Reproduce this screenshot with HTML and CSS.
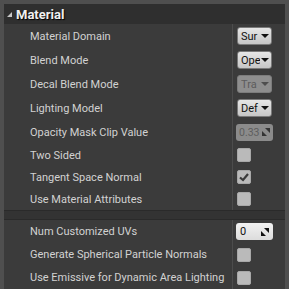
FILE: index.html
```html
<!DOCTYPE html>
<html>
<head>
<meta charset="utf-8">
<link rel="stylesheet" href="styles.css">
</head>
<body>
<div class="frame">
  <div class="panel">
    <div class="header"><span class="tri"></span><span class="title">Material</span></div>
    <div class="rows">
      <div class="row r24"><div class="label">Material Domain</div><div class="val"><div class="combo"><span class="ct">Sur</span><span class="arr"></span></div></div></div>
      <div class="row r24"><div class="label">Blend Mode</div><div class="val"><div class="combo"><span class="ct">Ope</span><span class="arr"></span></div></div></div>
      <div class="row r24"><div class="label">Decal Blend Mode</div><div class="val"><div class="combo dis"><span class="ct">Tra</span><span class="arr"></span></div></div></div>
      <div class="row r24"><div class="label">Lighting Model</div><div class="val"><div class="combo"><span class="ct">Def</span><span class="arr"></span></div></div></div>
      <div class="row r24"><div class="label">Opacity Mask Clip Value</div><div class="val"><div class="num dis"><span class="nt">0.33</span><svg class="spin" width="8" height="8" viewBox="0 0 8 8"><path d="M3 0H8V5Z"/><path d="M0 3V8H5Z"/></svg></div></div></div>
      <div class="row r22"><div class="label">Two Sided</div><div class="val"><div class="chk"></div></div></div>
      <div class="row r22"><div class="label">Tangent Space Normal</div><div class="val"><div class="chk"><svg width="14" height="14" viewBox="0 0 14 14"><path d="M3 7.5L6 10L11 4" fill="none" stroke="#3a3a3a" stroke-width="2.2"/></svg></div></div></div>
      <div class="row r22"><div class="label">Use Material Attributes</div><div class="val"><div class="chk"></div></div></div>
      <div class="sep"></div>
      <div class="row r23"><div class="label">Num Customized UVs</div><div class="val"><div class="num"><span class="nt">0</span><svg class="spin" width="8" height="8" viewBox="0 0 8 8"><path d="M3 0H8V5Z"/><path d="M0 3V8H5Z"/></svg></div></div></div>
      <div class="row r23"><div class="label">Generate Spherical Particle Normals</div><div class="val"><div class="chk"></div></div></div>
      <div class="row r23"><div class="label">Use Emissive for Dynamic Area Lighting</div><div class="val"><div class="chk"></div></div></div>
    </div>
  </div>
</div>
</body>
</html>
```

FILE: styles.css
```css
html, body {
  margin: 0;
  padding: 0;
  background: #4f4f4f;
  overflow: hidden;
}
.frame {
  width: 289px;
  height: 289px;
  padding: 4px 4px 0 4px;
  box-sizing: border-box;
}
.panel {
  width: 281px;
  height: 285px;
  background: #3b3b3b;
  display: flex;
  flex-direction: column;
  font-family: Roboto, "Noto Sans", sans-serif;
}
.header {
  height: 20px;
  background: #2f2f2f;
  display: flex;
  align-items: center;
  padding-left: 3px;
  flex: none;
}
.tri {
  width: 0;
  height: 0;
  border-left: 5px solid transparent;
  border-bottom: 5px solid #c8c8c8;
  margin-right: 4px;
  margin-top: 1px;
}
.title {
  color: #f0f0f0;
  font-weight: bold;
  font-size: 13px;
  text-shadow: 1px 1px 1px #000;
}
.rows {
  display: flex;
  flex-direction: column;
}
.row {
  display: flex;
  align-items: stretch;
}
.r24 { height: 24px; }
.r22 { height: 22px; }
.r23 { height: 23px; }
.label {
  width: 202px;
  padding-left: 26px;
  color: #d2d2d2;
  font-size: 11px;
  display: flex;
  align-items: center;
  white-space: nowrap;
  overflow: hidden;
}
.val {
  border-left: 1px solid #4c4c4c;
  padding-left: 4px;
  display: flex;
  align-items: center;
  flex: 1;
}
.sep {
  height: 10px;
  background: #333333;
  border-top: 1px solid #2a2a2a;
  border-bottom: 1px solid #2a2a2a;
  box-sizing: border-box;
}
.combo {
  width: 35px;
  height: 18px;
  box-sizing: border-box;
  border: 1px solid #7a7a7a;
  border-radius: 3px;
  background: linear-gradient(#e6e6e6, #c6c6c6);
  display: flex;
  align-items: center;
  padding-left: 3px;
  font-size: 11px;
  color: #111;
  overflow: hidden;
}
.combo .ct {
  width: 19px;
  overflow: hidden;
  white-space: nowrap;
}
.arr {
  width: 0;
  height: 0;
  border-left: 4px solid transparent;
  border-right: 4px solid transparent;
  border-top: 4px solid #111;
  margin-left: 1px;
}
.combo.dis {
  background: #8e8e8e;
  border-color: #7c7c7c;
  color: #5c5c5c;
}
.combo.dis .arr { border-top-color: #4e4e4e; }
.num {
  width: 37px;
  height: 17px;
  box-sizing: border-box;
  border-radius: 3px;
  background: linear-gradient(#f2f2f2, #dcdcdc);
  display: flex;
  align-items: center;
  justify-content: space-between;
  padding: 0 4px 0 4px;
  font-size: 11px;
  color: #111;
  margin-left: -1px;
}
.nt { flex: none; }
.spin { flex: none; }
.num .spin { fill: #111; }
.num.dis {
  background: #8b8b8b;
  color: #5e5e5e;
  padding: 0 3px 0 3px;
  font-size: 10.5px;
}
.num.dis .spin { fill: #333; }
.chk {
  width: 14px;
  height: 14px;
  border-radius: 2px;
  background: #bababa;
  box-sizing: border-box;
  border: 1px solid #a8a8a8;
}
.chk svg { display: block; margin: -1px; }
```
